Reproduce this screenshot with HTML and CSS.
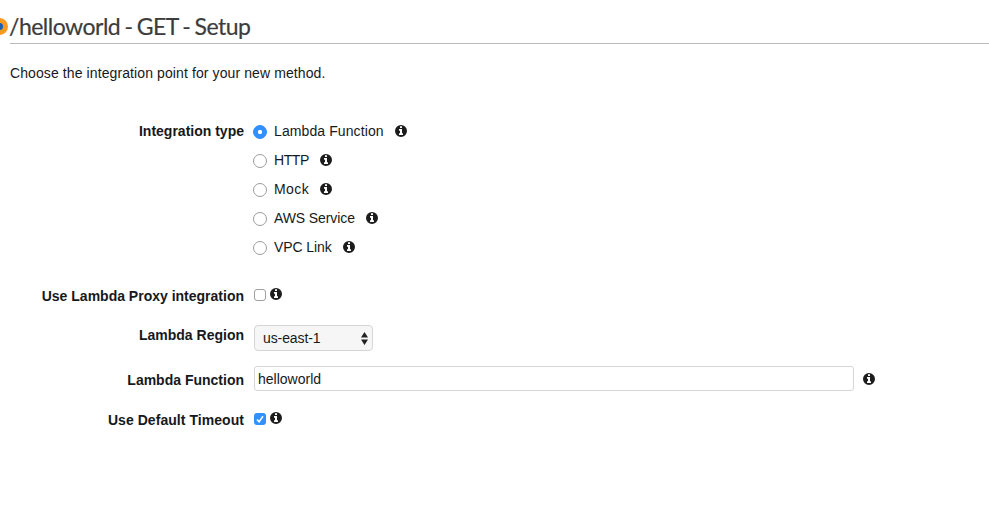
FILE: index.html
```html
<!DOCTYPE html>
<html lang="en">
<head>
<meta charset="utf-8">
<title>Method setup</title>
<link rel="stylesheet" href="styles.css">
</head>
<body>
<svg class="defs" width="0" height="0" aria-hidden="true">
  <symbol id="info" viewBox="0 128 1536 1536">
    <path fill-rule="evenodd" d="M1024 1376v-160q0-14-9-23t-23-9h-96v-512q0-14-9-23t-23-9h-320q-14 0-23 9t-9 23v160q0 14 9 23t23 9h96v320h-96q-14 0-23 9t-9 23v160q0 14 9 23t23 9h448q14 0 23-9t9-23zM896 480v-160q0-14-9-23t-23-9h-192q-14 0-23 9t-9 23v160q0 14 9 23t23 9h192q14 0 23-9t9-23zM1536 896a768 768 0 1 1-1536 0a768 768 0 1 1 1536 0z"/>
  </symbol>
</svg>
<main class="page">
  <header class="title">
    <span class="marker"></span>
    <h1>/helloworld - GET - Setup</h1>
  </header>
  <p class="intro">Choose the integration point for your new method.</p>
  <form class="form">
    <div class="row types">
      <span class="label">Integration type</span>
      <div class="options">
        <label class="option"><input class="radio" type="radio" name="type" checked><span class="loose">Lambda Function</span><svg class="info"><use href="#info"/></svg></label>
        <label class="option"><input class="radio" type="radio" name="type"><span class="tight">HTTP</span><svg class="info"><use href="#info"/></svg></label>
        <label class="option"><input class="radio" type="radio" name="type"><span class="wide">Mock</span><svg class="info"><use href="#info"/></svg></label>
        <label class="option"><input class="radio" type="radio" name="type"><span class="snug">AWS Service</span><svg class="info"><use href="#info"/></svg></label>
        <label class="option"><input class="radio" type="radio" name="type"><span class="snug">VPC Link</span><svg class="info"><use href="#info"/></svg></label>
      </div>
    </div>
    <div class="row proxy">
      <span class="label">Use Lambda Proxy integration</span>
      <div class="check"><span class="box"></span><svg class="info"><use href="#info"/></svg></div>
    </div>
    <div class="row region">
      <span class="label">Lambda Region</span>
      <div class="select"><span class="snug">us-east-1</span><svg class="arrows" viewBox="0 0 7 13"><path d="M0 5.4L3.5 0L7 5.4zM0 7.6h7L3.5 13z"/></svg></div>
    </div>
    <div class="row function">
      <span class="label">Lambda Function</span>
      <div class="field"><input class="text" type="text" value="helloworld"><svg class="info"><use href="#info"/></svg></div>
    </div>
    <div class="row timeout">
      <span class="label">Use Default Timeout</span>
      <div class="check"><span class="box on"><svg class="tick" viewBox="0 0 12 12"><path d="M3 6.4L5.1 8.8L9 3.2"/></svg></span><svg class="info"><use href="#info"/></svg></div>
    </div>
  </form>
</main>
</body>
</html>
```
FILE: styles.css
```css
* { box-sizing: border-box; }
body {
  margin: 0;
  background: #fff;
  color: #16191b;
  font: 14px/20px "Liberation Sans", Arial, sans-serif;
  overflow: hidden;
}
.defs { position: absolute; }
.page { padding: 10px 0 0 10px; }
.title {
  position: relative;
  height: 34px;
  border-bottom: 1px solid #bbb;
}
.title h1 {
  margin: 0 0 0 -1px;
  font: 400 23px/33px Lato, sans-serif;
  letter-spacing: -0.5px;
  word-spacing: -1.2px;
  color: #3c3c3c;
  -webkit-text-stroke: 0.2px #3c3c3c;
  white-space: nowrap;
}
.marker {
  position: absolute;
  left: -19px;
  top: 8px;
  width: 17px;
  height: 17px;
  border: 5px solid #fb9a20;
  border-radius: 50%;
  background: #1b5fae;
}
.intro { margin: 19px 0 0; letter-spacing: 0.1px; }
.form { margin-top: 38px; }
.row {
  display: grid;
  grid-template-columns: 234px 1fr;
  column-gap: 10px;
  align-items: start;
}
.label { text-align: right; font-weight: 700; white-space: nowrap; }
.types { height: 165px; }
.options { margin-left: -1px; }
.option { display: flex; align-items: center; height: 20px; margin-bottom: 9px; }
.option .info { margin-left: 11px; }
.loose { letter-spacing: 0.1px; }
.wide { letter-spacing: 0.4px; }
.tight { letter-spacing: -0.4px; }
.snug { letter-spacing: -0.1px; }
.radio {
  appearance: none;
  width: 14px;
  height: 14px;
  margin: 2px 7px 0 0;
  border: 1px solid #9c9c9c;
  border-radius: 50%;
  background: #fff;
}
.radio:checked {
  border-color: #2f8bfb;
  background: radial-gradient(circle, #fff 0 1.8px, #3290fd 2.5px);
}
.info { flex: none; width: 12px; height: 12px; fill: #1c1c1c; }
.check { display: flex; align-items: flex-start; gap: 4px; padding-top: 2px; }
.box { width: 12px; height: 12px; margin-top: 1px; border: 1px solid #a0a0a0; border-radius: 3px; }
.box.on { border: 0; background: #3290fd; }
.tick { display: block; width: 12px; height: 12px; fill: none; stroke: #fff; stroke-width: 1.5; }
.proxy { height: 39px; }
.region { height: 41px; }
.select {
  display: flex;
  align-items: center;
  justify-content: space-between;
  width: 119px;
  height: 26px;
  padding: 0 4px 0 8px;
  border: 1px solid #d5d5d5;
  border-radius: 4px;
  background: #f6f6f6;
}
.arrows { width: 7px; height: 13px; fill: #222; }
.function { height: 44px; }
.function .label { padding-top: 4px; }
.timeout .label { letter-spacing: 0.05px; }
.field { display: flex; align-items: center; gap: 9px; }
.text {
  width: 600px;
  height: 25px;
  padding: 0 3px;
  border: 1px solid #d5d5d5;
  border-radius: 3px;
  background: #fff;
  color: inherit;
  font: inherit;
}
```
